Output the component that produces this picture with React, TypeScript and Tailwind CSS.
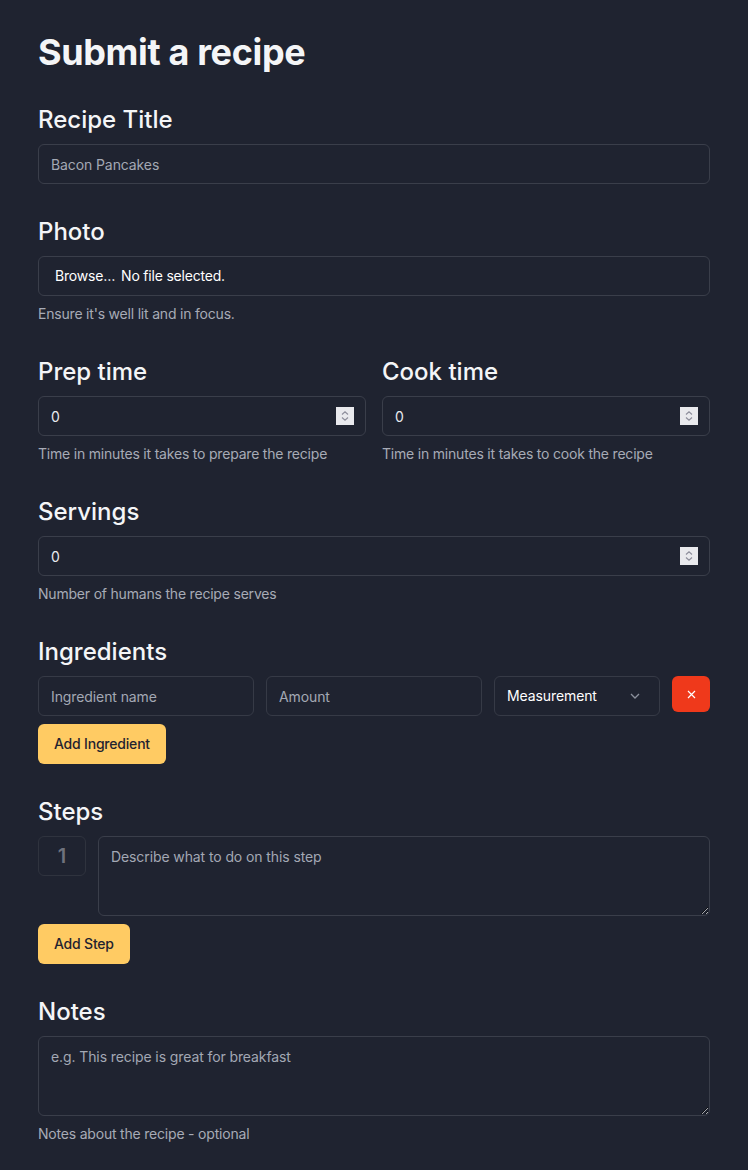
import type { ReactNode } from 'react';

const inputBase =
  'h-10 w-full rounded-md border border-[#3a3e4a] bg-transparent px-3 text-sm tracking-[-0.1px] text-[#e8eaef] placeholder:text-[#a3a8b4] outline-none';

function Label({ children }: { children: ReactNode }) {
  return <h2 className="mb-2 text-2xl font-medium leading-8 text-[#f4f5f7]">{children}</h2>;
}

function Hint({ children }: { children: ReactNode }) {
  return <p className="mt-2 text-sm leading-5 tracking-[-0.2px] text-[#a7abb6]">{children}</p>;
}

function Spinner() {
  return (
    <div className="pointer-events-none absolute right-3 top-1/2 flex h-[18px] w-[18px] -translate-y-1/2 flex-col items-center justify-center gap-[2px] bg-[#e9e9ed]">
      <svg width="8" height="4" viewBox="0 0 8 4" fill="none">
        <path d="M1 3.5L4 0.8L7 3.5" stroke="#8f8f9d" strokeWidth="1.2" />
      </svg>
      <svg width="8" height="4" viewBox="0 0 8 4" fill="none">
        <path d="M1 0.5L4 3.2L7 0.5" stroke="#8f8f9d" strokeWidth="1.2" />
      </svg>
    </div>
  );
}

function NumberField({ value }: { value: string }) {
  return (
    <div className="relative">
      <input
        type="number"
        defaultValue={value}
        className={`${inputBase} [appearance:textfield] [&::-webkit-inner-spin-button]:appearance-none [&::-webkit-outer-spin-button]:appearance-none`}
      />
      <Spinner />
    </div>
  );
}

export default function App() {
  return (
    <div
      className="min-h-screen bg-[#1f2330] px-[38px] pt-8 pb-8 text-[#f4f5f7]"
      style={{ fontFamily: 'Inter, "Noto Sans", sans-serif' }}
    >
      <form className="flex flex-col gap-8" onSubmit={(e) => e.preventDefault()}>
        <h1 className="text-[36px] font-bold leading-10 tracking-[-0.01em]">Submit a recipe</h1>

        {/* Title */}
        <div>
          <Label>Recipe Title</Label>
          <input className={inputBase} placeholder="Bacon Pancakes" />
        </div>

        {/* Photo */}
        <div>
          <Label>Photo</Label>
          <div className="flex h-10 w-full items-center gap-[6px] rounded-md border border-[#3a3e4a] pl-4 text-sm tracking-[-0.2px] text-white">
            <span>Browse…</span>
            <span>No file selected.</span>
          </div>
          <Hint>Ensure it's well lit and in focus.</Hint>
        </div>

        {/* Times */}
        <div className="grid grid-cols-2 gap-4">
          <div>
            <Label>Prep time</Label>
            <NumberField value="0" />
            <Hint>Time in minutes it takes to prepare the recipe</Hint>
          </div>
          <div>
            <Label>Cook time</Label>
            <NumberField value="0" />
            <Hint>Time in minutes it takes to cook the recipe</Hint>
          </div>
        </div>

        {/* Servings */}
        <div>
          <Label>Servings</Label>
          <NumberField value="0" />
          <Hint>Number of humans the recipe serves</Hint>
        </div>

        {/* Ingredients */}
        <div>
          <Label>Ingredients</Label>
          <div className="flex items-start gap-3">
            <input className={`${inputBase} flex-1 border-[#363a46]`} placeholder="Ingredient name" />
            <input className={`${inputBase} flex-1 border-[#363a46]`} placeholder="Amount" />
            <div className="relative w-[166px] shrink-0">
              <select className={`${inputBase} appearance-none border-[#363a46] text-white`} defaultValue="">
                <option value="" className="bg-[#1f2330]">Measurement</option>
                <option className="bg-[#1f2330]">Grams</option>
                <option className="bg-[#1f2330]">Cups</option>
              </select>
              <svg
                className="pointer-events-none absolute right-[20px] top-1/2 -translate-y-1/2"
                width="10"
                height="6"
                viewBox="0 0 10 6"
                fill="none"
              >
                <path d="M1 1L5 5L9 1" stroke="#8b909c" strokeWidth="1.3" />
              </svg>
            </div>
            <button
              type="button"
              className="flex h-9 w-[38px] shrink-0 items-center justify-center rounded-md bg-[#ef391b]"
            >
              <svg width="9" height="9" viewBox="0 0 9 9" fill="none">
                <path d="M1 1L8 8M8 1L1 8" stroke="white" strokeWidth="1.2" />
              </svg>
            </button>
          </div>
          <button
            type="button"
            className="mt-2 h-10 rounded-md bg-[#ffcb63] px-4 text-sm font-medium tracking-[-0.2px] text-[#1f2330]"
          >
            Add Ingredient
          </button>
        </div>

        {/* Steps */}
        <div>
          <Label>Steps</Label>
          <div className="flex items-start gap-3">
            <div className="flex h-10 w-12 shrink-0 items-center justify-center rounded-md border border-[#2f333e] text-xl font-semibold text-[#6e727d]">
              1
            </div>
            <textarea
              className="h-20 flex-1 resize-y rounded-md border border-[#3a3e4a] bg-transparent px-3 py-2.5 text-sm tracking-[-0.1px] text-[#e8eaef] placeholder:text-[#a3a8b4] outline-none"
              placeholder="Describe what to do on this step"
            />
          </div>
          <button
            type="button"
            className="mt-2 h-10 rounded-md bg-[#ffcb63] px-4 text-sm font-medium tracking-[-0.2px] text-[#1f2330]"
          >
            Add Step
          </button>
        </div>

        {/* Notes */}
        <div>
          <Label>Notes</Label>
          <textarea
            className="block h-20 w-full resize-y rounded-md border border-[#3a3e4a] bg-transparent px-3 py-2.5 text-sm tracking-[-0.1px] text-[#e8eaef] placeholder:text-[#a3a8b4] outline-none"
            placeholder="e.g. This recipe is great for breakfast"
          />
          <Hint>Notes about the recipe - optional</Hint>
        </div>
      </form>
    </div>
  );
}
